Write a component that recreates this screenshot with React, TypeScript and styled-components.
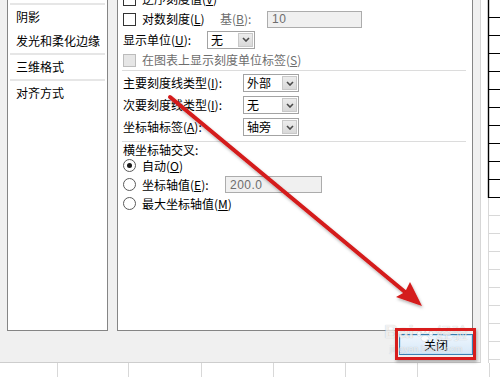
import React from "react";
import styled, { createGlobalStyle } from "styled-components";

const GlobalStyle = createGlobalStyle`
  html, body { margin: 0; padding: 0; background: #fff; }
  body {
    font-family: "Noto Sans CJK SC", "Microsoft YaHei", sans-serif;
    font-size: 12px;
    color: #000;
  }
`;

const Page = styled.div`
  position: relative;
  width: 500px;
  height: 377px;
  overflow: hidden;
  display: grid;
  grid-template-columns: 481px 19px;
  grid-template-rows: 363px 14px;
  background: #fff;
`;

const Dialog = styled.div`
  background: #f0f0f0;
  border-right: 1px solid #d6d6d6;
  border-bottom: 1px solid #cdcdcd;
  padding: 0 7px;
  display: flex;
  flex-direction: column;
  overflow: hidden;
`;

const Body = styled.div`
  display: flex;
  gap: 9px;
  margin-top: -22px;
  height: 353px;
  flex-shrink: 0;
`;

const Nav = styled.div`
  width: 101px;
  box-sizing: border-box;
  background: #fff;
  border: 1px solid #858585;
  padding-top: 24px;
  display: flex;
  flex-direction: column;
`;

const NavItem = styled.div`
  height: 24px;
  line-height: 24px;
  padding-left: 8px;
  white-space: nowrap;
`;

const NavSep = styled.div`
  height: 2px;
  margin: 0 2px;
  background: #e6e6e6;
`;

const Panel = styled.div`
  flex: 1;
  box-sizing: border-box;
  background: #fff;
  border: 1px solid #858585;
  padding: 10px 6px 0 5px;
  display: flex;
  flex-direction: column;
`;

const Row = styled.div<{ $h: number; $mt?: number }>`
  height: ${(p) => p.$h}px;
  margin-top: ${(p) => p.$mt ?? 0}px;
  display: flex;
  align-items: center;
  white-space: nowrap;
`;

const Sep = styled.div<{ $mt?: number; $mb?: number }>`
  height: 1px;
  margin: ${(p) => p.$mt ?? 0}px 0 ${(p) => p.$mb ?? 0}px -1px;
  background: #dcdcdc;
`;

const Cell = styled.div<{ $w: number }>`
  width: ${(p) => p.$w}px;
  flex-shrink: 0;
  display: flex;
  align-items: center;
`;

const Text = styled.span<{ $disabled?: boolean }>`
  color: ${(p) => (p.$disabled ? "#6d6d6d" : "#000")};
  line-height: 14px;
`;

const Key = styled.span`
  text-decoration: underline;
  text-underline-offset: 1px;
`;

const Box = styled.span<{ $disabled?: boolean }>`
  width: 13px;
  height: 13px;
  box-sizing: border-box;
  flex-shrink: 0;
  margin-right: 6px;
  border: 1px solid ${(p) => (p.$disabled ? "#bcbcbc" : "#333")};
  background: ${(p) => (p.$disabled ? "#e6e6e6" : "#fff")};
`;

const Radio = styled.span<{ $on?: boolean }>`
  width: 13px;
  height: 13px;
  box-sizing: border-box;
  flex-shrink: 0;
  margin-right: 6px;
  border-radius: 50%;
  border: 1px solid #5a5a5a;
  background: #fff;
  display: flex;
  align-items: center;
  justify-content: center;
  &::after {
    content: "";
    display: ${(p) => (p.$on ? "block" : "none")};
    width: 5px;
    height: 5px;
    border-radius: 50%;
    background: #1a1a1a;
  }
`;

const SelectBox = styled.div<{ $w: number }>`
  width: ${(p) => p.$w}px;
  height: 18px;
  box-sizing: border-box;
  border: 1px solid #a3a3a3;
  background: #fff;
  display: flex;
  align-items: stretch;
  padding: 1px;
`;

const SelectValue = styled.div`
  flex: 1;
  padding-left: 2px;
  line-height: 14px;
  display: flex;
  align-items: center;
`;

const SelectBtn = styled.div`
  width: 15px;
  box-sizing: border-box;
  border: 1px solid #c8c8c8;
  background: linear-gradient(#ececec, #d9d9d9);
  display: flex;
  align-items: center;
  justify-content: center;
`;

const Input = styled.div<{ $w: number }>`
  width: ${(p) => p.$w}px;
  height: 17px;
  box-sizing: border-box;
  border: 1px solid #acacac;
  background: #f0f0f0;
  color: #6d6d6d;
  padding-left: 4px;
  display: flex;
  align-items: center;
  font-family: "Liberation Sans", "Noto Sans CJK SC", sans-serif;
  letter-spacing: 0.5px;
`;

const Footer = styled.div`
  display: flex;
  justify-content: flex-end;
  padding-top: 3px;
`;

const Button = styled.div`
  width: 74px;
  height: 21px;
  box-sizing: border-box;
  border: 1px solid #3c7fb1;
  background: linear-gradient(#eef6fd, #d6e8f8);
  box-shadow: inset 0 0 0 1px #c4e2f7;
  display: flex;
  align-items: center;
  justify-content: center;
`;

const RightStrip = styled.div`
  background: #fff;
`;

const BottomStrip = styled.div`
  grid-column: 1 / span 2;
  display: flex;
  background: #fff;
`;

const SheetCell = styled.div<{ $w: number }>`
  width: ${(p) => p.$w}px;
  flex-shrink: 0;
  box-sizing: border-box;
  border-right: 1px solid #d8d8d8;
`;

const Overlay = styled.svg`
  position: absolute;
  left: 0;
  top: 0;
  pointer-events: none;
`;

const Highlight = styled.div`
  position: absolute;
  left: 395px;
  top: 328px;
  width: 81px;
  height: 32px;
  box-sizing: border-box;
  border: 3px solid #d81c1c;
  box-shadow: 1px 2px 3px rgba(0, 0, 0, 0.3);
  pointer-events: none;
`;

const Watermark = styled.div`
  position: absolute;
  left: 380px;
  top: 322px;
  width: 92px;
  display: flex;
  flex-direction: column;
  align-items: center;
  color: rgba(255, 255, 255, 0.75);
  text-shadow: 0 0 1px rgba(0, 0, 0, 0.25);
  pointer-events: none;
`;

const WmTop = styled.div`
  display: flex;
  align-items: flex-end;
  gap: 2px;
`;

const WmLogo = styled.span`
  font-family: "Liberation Sans", sans-serif;
  font-weight: bold;
  font-size: 19px;
  line-height: 20px;
`;

const WmCn = styled.span`
  font-size: 16px;
  line-height: 20px;
`;

const WmUrl = styled.span`
  font-family: "Liberation Sans", sans-serif;
  font-size: 9px;
  line-height: 10px;
  margin-top: 2px;
`;

const Chevron = () => (
  <svg width="8" height="5" viewBox="0 0 8 5">
    <path d="M1 1 L4 4 L7 1" fill="none" stroke="#4a4a4a" strokeWidth="1.6" />
  </svg>
);

const Select = ({ w, value }: { w: number; value: string }) => (
  <SelectBox $w={w}>
    <SelectValue>{value}</SelectValue>
    <SelectBtn>
      <Chevron />
    </SelectBtn>
  </SelectBox>
);

const Paw = () => (
  <svg width="18" height="14" viewBox="0 0 18 14">
    <g fill="rgba(255,255,255,0.8)" stroke="rgba(0,0,0,0.15)" strokeWidth="0.5">
      <ellipse cx="3" cy="6" rx="2" ry="2.5" />
      <ellipse cx="7" cy="2.8" rx="2" ry="2.5" />
      <ellipse cx="11.5" cy="2.8" rx="2" ry="2.5" />
      <ellipse cx="15" cy="6" rx="2" ry="2.5" />
      <ellipse cx="9" cy="10.5" rx="4" ry="3" />
    </g>
  </svg>
);

const ChartAxis = () => {
  const ticks = Array.from({ length: 11 }, (_, i) => 17 + i * 18);
  const grid = Array.from({ length: 9 }, (_, i) => 215 + i * 18);
  return (
    <svg width="19" height="363" viewBox="0 0 19 363">
      {grid.map((y) => (
        <line key={`g${y}`} x1="7" x2="19" y1={y + 0.5} y2={y + 0.5} stroke="#d8d8d8" />
      ))}
      <line x1="7.5" x2="7.5" y1="197" y2="363" stroke="#d8d8d8" />
      <line x1="7.5" x2="7.5" y1="0" y2="198" stroke="#000" strokeWidth="1.4" />
      {ticks.map((y) => (
        <line key={y} x1="7" x2="19" y1={y + 0.5} y2={y + 0.5} stroke="#000" />
      ))}
    </svg>
  );
};

export default function App() {
  return (
    <>
      <GlobalStyle />
      <Page>
        <Dialog>
          <Body>
            <Nav>
              <NavSep />
              <NavItem>阴影</NavItem>
              <NavItem>发光和柔化边缘</NavItem>
              <NavSep />
              <NavItem>三维格式</NavItem>
              <NavSep />
              <NavItem>对齐方式</NavItem>
            </Nav>
            <Panel>
              <Row $h={20}>
                <Box />
                <Text>
                  逆序刻度值(<Key>V</Key>)
                </Text>
              </Row>
              <Row $h={20}>
                <Cell $w={97}>
                  <Box />
                  <Text>
                    对数刻度(<Key>L</Key>)
                  </Text>
                </Cell>
                <Cell $w={47}>
                  <Text $disabled>
                    基(<Key>B</Key>):
                  </Text>
                </Cell>
                <Input $w={95}>10</Input>
              </Row>
              <Row $h={21}>
                <Cell $w={84}>
                  <Text>
                    显示单位(<Key>U</Key>):
                  </Text>
                </Cell>
                <Select w={48} value="无" />
              </Row>
              <Row $h={20}>
                <Box $disabled />
                <Text $disabled>
                  在图表上显示刻度单位标签(<Key>S</Key>)
                </Text>
              </Row>
              <Sep $mb={1} />
              <Row $h={22}>
                <Cell $w={120}>
                  <Text>
                    主要刻度线类型(<Key>I</Key>):
                  </Text>
                </Cell>
                <Select w={56} value="外部" />
              </Row>
              <Row $h={22}>
                <Cell $w={120}>
                  <Text>
                    次要刻度线类型(<Key>I</Key>):
                  </Text>
                </Cell>
                <Select w={56} value="无" />
              </Row>
              <Row $h={22}>
                <Cell $w={120}>
                  <Text>
                    坐标轴标签(<Key>A</Key>):
                  </Text>
                </Cell>
                <Select w={56} value="轴旁" />
              </Row>
              <Sep $mt={3} />
              <Row $h={13} $mt={1}>
                <Text>横坐标轴交叉:</Text>
              </Row>
              <Row $h={19}>
                <Radio $on />
                <Text>
                  自动(<Key>O</Key>)
                </Text>
              </Row>
              <Row $h={19}>
                <Cell $w={102}>
                  <Radio />
                  <Text>
                    坐标轴值(<Key>E</Key>):
                  </Text>
                </Cell>
                <Input $w={97}>200.0</Input>
              </Row>
              <Row $h={19}>
                <Radio />
                <Text>
                  最大坐标轴值(<Key>M</Key>)
                </Text>
              </Row>
            </Panel>
          </Body>
          <Footer>
            <Button>关闭</Button>
          </Footer>
        </Dialog>
        <RightStrip>
          <ChartAxis />
        </RightStrip>
        <BottomStrip>
          <SheetCell $w={58} />
          <SheetCell $w={71} />
          <SheetCell $w={73} />
          <SheetCell $w={72} />
          <SheetCell $w={72} />
          <SheetCell $w={72} />
          <SheetCell $w={72} />
        </BottomStrip>

        <Watermark>
          <WmTop>
            <WmLogo>Bai</WmLogo>
            <Paw />
            <WmCn>经验</WmCn>
          </WmTop>
          <WmUrl>jingyan.baidu.com</WmUrl>
        </Watermark>
        <Highlight />
        <Overlay width="500" height="377" viewBox="0 0 500 377">
          <defs>
            <filter id="arrowShadow" x="-10%" y="-10%" width="130%" height="130%">
              <feDropShadow dx="1" dy="2" stdDeviation="1.5" floodColor="#000" floodOpacity="0.3" />
            </filter>
          </defs>
          <g filter="url(#arrowShadow)">
            <line x1="170" y1="97" x2="405" y2="292" stroke="#d41a1a" strokeWidth="4" strokeLinecap="round" />
            <polygon points="422,306 396,297 405,292 410,282" fill="#d41a1a" />
          </g>
        </Overlay>
      </Page>
    </>
  );
}
